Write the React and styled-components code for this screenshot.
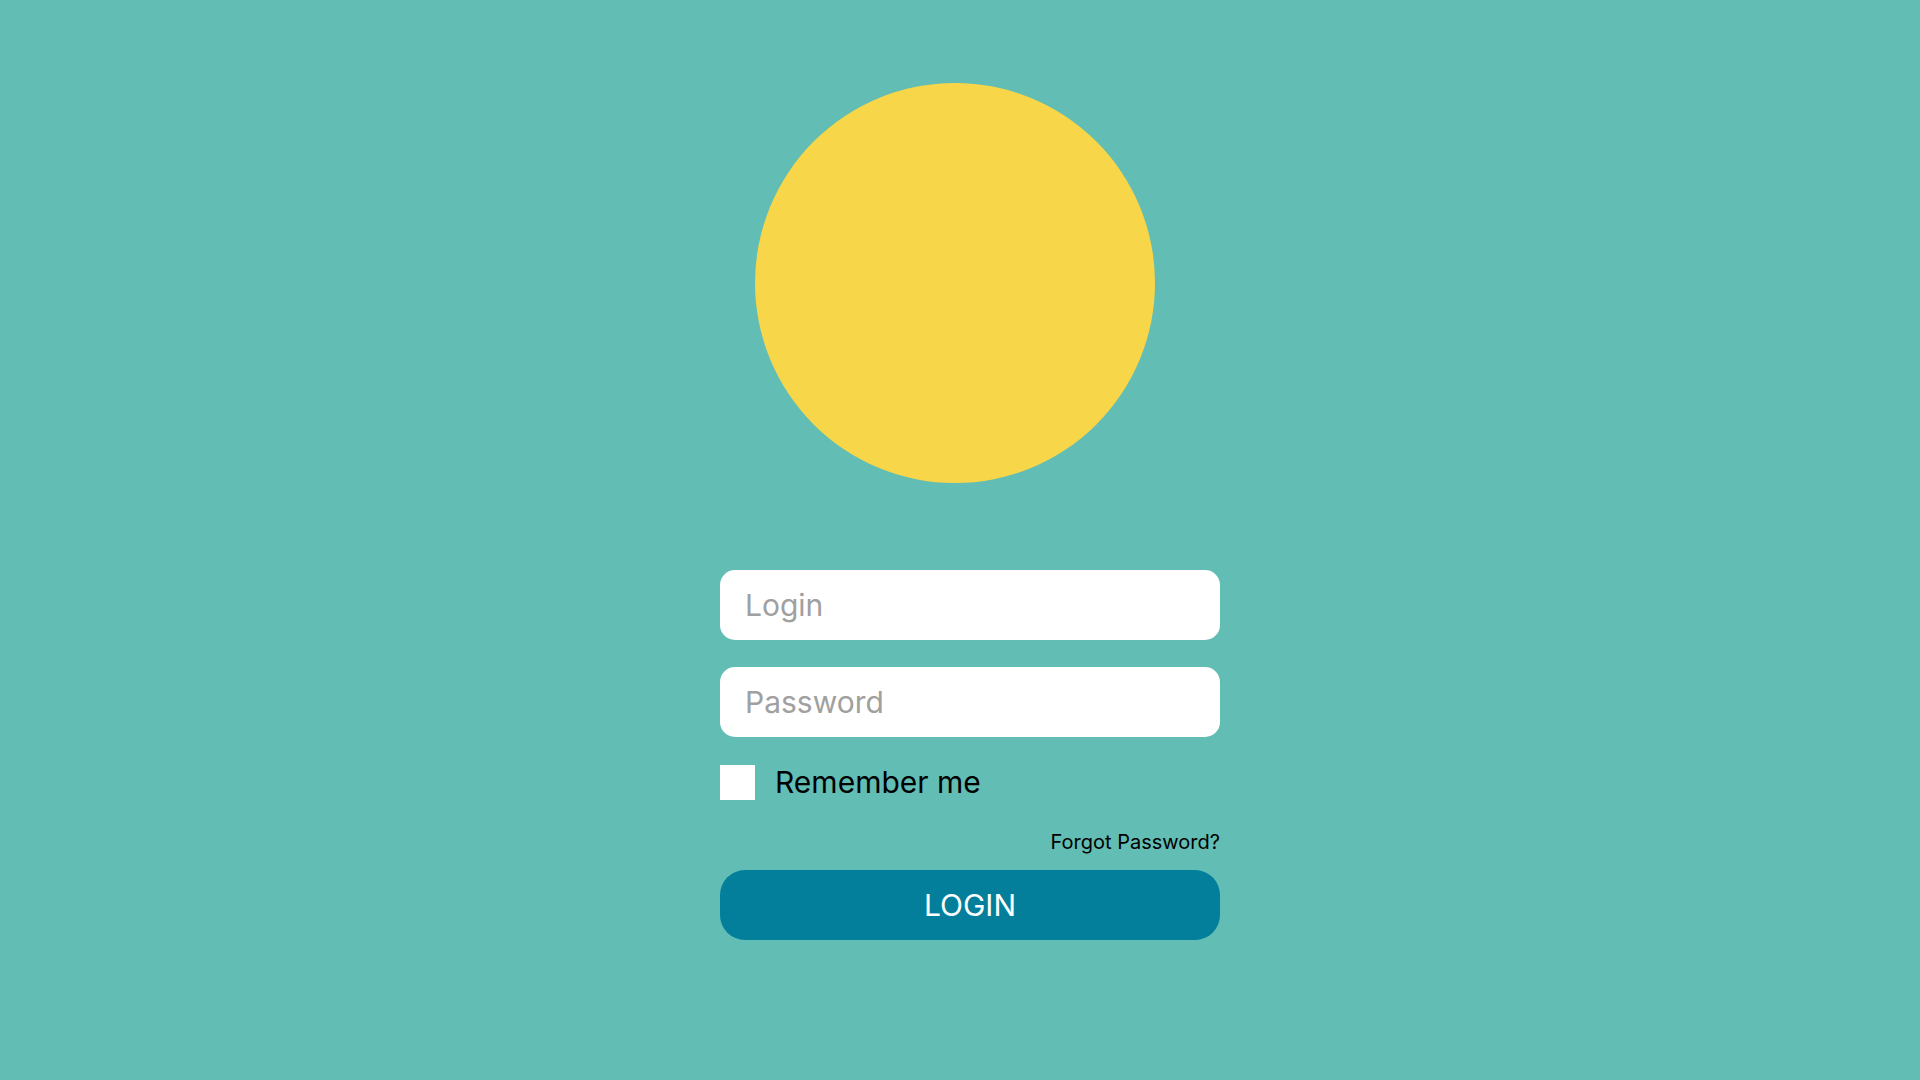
import React from 'react';
import styled, { createGlobalStyle } from 'styled-components';

const GlobalStyle = createGlobalStyle`
  html, body {
    margin: 0;
    padding: 0;
    background: #62bdb4;
    font-family: Inter, 'Liberation Sans', sans-serif;
  }
`;

const Page = styled.div`
  min-height: 100vh;
  display: flex;
  flex-direction: column;
  align-items: center;
`;

const Sun = styled.div`
  width: 400px;
  height: 400px;
  border-radius: 50%;
  background: #f8d649;
  margin-top: 83px;
  margin-right: 10px;
`;

const Form = styled.form`
  width: 500px;
  margin-top: 87px;
  margin-left: 20px;
  display: flex;
  flex-direction: column;
`;

const Fields = styled.div`
  display: flex;
  flex-direction: column;
  gap: 27px;
`;

const Input = styled.input`
  box-sizing: border-box;
  width: 100%;
  height: 70px;
  border: none;
  outline: none;
  border-radius: 15px;
  background: #fff;
  padding: 0 25px;
  font-family: inherit;
  font-size: 30px;
  color: #333;

  &::placeholder {
    color: #a0a0a0;
  }
`;

const CheckRow = styled.label`
  display: flex;
  align-items: center;
  gap: 20px;
  margin-top: 27px;
  font-size: 30px;
  color: #000;
`;

const Box = styled.span`
  width: 35px;
  height: 35px;
  background: #fff;
  display: block;
`;

const Forgot = styled.a`
  align-self: flex-end;
  margin-top: 30px;
  font-size: 20px;
  line-height: 24px;
  color: #000;
  text-decoration: none;
`;

const Button = styled.button`
  margin-top: 16px;
  height: 70px;
  border: none;
  border-radius: 25px;
  background: #037f9b;
  color: #fff;
  font-family: inherit;
  font-size: 30px;
`;

const App = () => {
  return (
    <Page>
      <GlobalStyle />
      <Sun />
      <Form onSubmit={(e) => e.preventDefault()}>
        <Fields>
          <Input type="text" placeholder="Login" />
          <Input type="password" placeholder="Password" />
        </Fields>
        <CheckRow>
          <Box />
          Remember me
        </CheckRow>
        <Forgot href="#">Forgot Password?</Forgot>
        <Button type="submit">LOGIN</Button>
      </Form>
    </Page>
  );
};

export default App;
